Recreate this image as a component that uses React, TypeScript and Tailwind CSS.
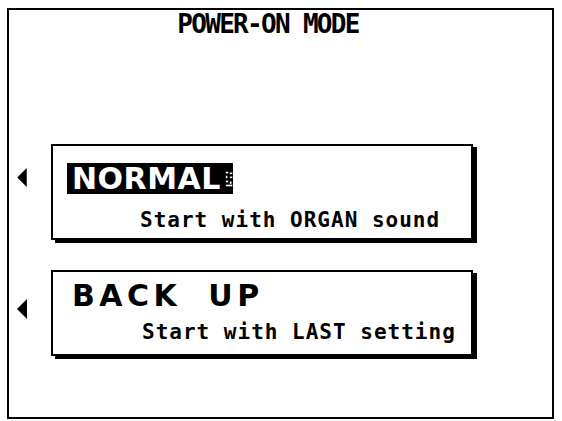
const mono = "font-['DejaVu_Sans_Mono',monospace] font-bold text-black";
const big = "font-['DejaVu_Sans',sans-serif] font-bold text-[30px] leading-none";

function LeftArrow({ className }: { className: string }) {
  return (
    <svg viewBox="0 0 10 20" className={className}>
      <polygon points="10,0 10,20 0,10" fill="#000" />
    </svg>
  );
}

// little stray glyph the LCD leaves after the highlighted word
function CursorMark() {
  return (
    <svg viewBox="0 0 10 18" className="ml-[4px] h-[18px] w-[10px]">
      <rect x="1" y="0" width="3" height="2" fill="#fff" />
      <rect x="6" y="1" width="3" height="2" fill="#fff" />
      <rect x="1" y="5" width="2" height="3" fill="#fff" />
      <rect x="6" y="6" width="3" height="2" fill="#fff" />
      <rect x="1" y="11" width="3" height="2" fill="#fff" />
      <rect x="6" y="12" width="2" height="3" fill="#fff" />
      <rect x="1" y="16" width="8" height="2" fill="#fff" />
    </svg>
  );
}

export default function App() {
  return (
    <div className="h-[421px] w-[562px] overflow-hidden bg-white">
      <div className="ml-[7px] mt-[8px] flex h-[411px] w-[547px] flex-col border-2 border-black">
        <div className="flex justify-center pr-[25px] pt-[1px]">
          <h1 className={`${mono} text-[26px] leading-none tracking-[-1.7px]`}>POWER-ON MODE</h1>
        </div>

        <div className="mt-[107px] flex items-start">
          <LeftArrow className="ml-[8px] mt-[24px] h-[19px] w-[10px]" />
          <div className="ml-[24px] flex h-[96px] w-[422px] flex-col border-2 border-black pl-[14px] pt-[17px] shadow-[4px_3px_0_#000]">
            <div className="flex h-[31px] w-[166px] items-center bg-black pl-[5px]">
              <span className={`${big} tracking-[0.5px] text-white`}>NORMAL</span>
              <CursorMark />
            </div>
            <p className={`${mono} ml-[73px] mt-[16px] text-[21px] leading-none tracking-[1px]`}>Start with ORGAN sound</p>
          </div>
        </div>

        <div className="mt-[30px] flex items-start">
          <LeftArrow className="ml-[8px] mt-[29px] h-[20px] w-[10px]" />
          <div className="ml-[24px] flex h-[86px] w-[422px] flex-col border-2 border-black pl-[14px] pt-[9px] shadow-[4px_3px_0_#000]">
            <span className={`${big} ml-[5px] tracking-[4.5px] [word-spacing:12px] text-black`}>BACK UP</span>
            <p className={`${mono} ml-[75px] mt-[11px] text-[21px] leading-none tracking-[1px]`}>Start with LAST setting</p>
          </div>
        </div>
      </div>
    </div>
  );
}
